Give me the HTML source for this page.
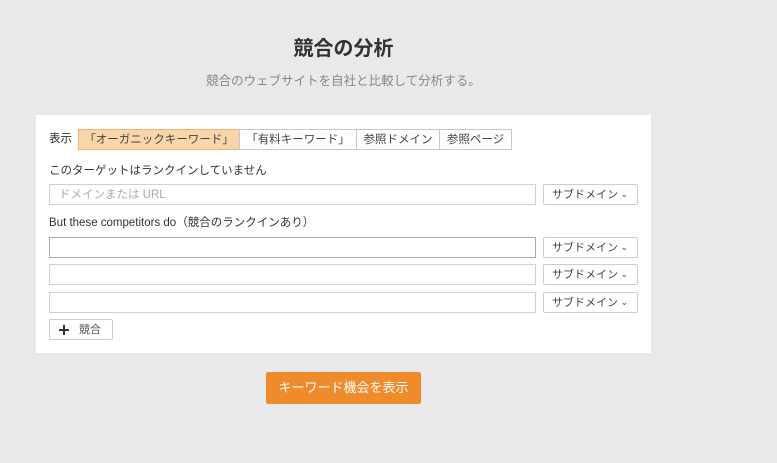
<!DOCTYPE html>
<html><head><meta charset="utf-8"><style>
*{box-sizing:border-box;margin:0;padding:0}
body{width:777px;height:463px;background:#e9e9eb;font-family:"Liberation Sans","Noto Sans CJK JP",sans-serif;position:relative;overflow:hidden;color:#333}
.a{position:absolute}
h1{position:absolute;left:0;width:687px;top:36px;text-align:center;font-size:20px;font-weight:bold;color:#333;line-height:26px}
.sub{left:0;width:687px;top:73px;text-align:center;font-size:12.5px;color:#888;line-height:16px}
.panel{left:36px;top:115px;width:615px;height:238px;background:#fff}
.lbl{font-size:11.5px;color:#333;line-height:14px}
.f{display:flex;align-items:center}
.tab{top:129px;height:21px;border:1px solid #c8c8c8;font-size:11.5px;justify-content:center;background:#fff;color:#444;line-height:14px}
.inp{left:49px;width:487px;height:21px;border:1px solid #d0d0d0;background:#fff;font-size:11.5px;color:#aaa;padding-left:9px;line-height:14px}
.sel{left:543px;width:95px;height:21px;border:1px solid #ccc;border-radius:2px;font-size:11px;padding-left:8px;color:#444;background:#fff;line-height:14px}
.sel i{font-style:normal;position:absolute;right:9px;top:2px;font-size:9px}
.btn{left:266px;top:372px;width:155px;height:32px;background:#ef8b2b;color:#fff;font-size:13px;justify-content:center;border-radius:2px;line-height:16px}
</style></head><body>
<h1>競合の分析</h1>
<div class="a sub">競合のウェブサイトを自社と比較して分析する。</div>
<div class="a panel"></div>
<div class="a lbl" style="left:49px;top:132px">表示</div>
<div class="a tab f" style="left:78px;width:162px;background:#f8d6aa;border-color:#e8b67e">「オーガニックキーワード」</div>
<div class="a tab f" style="left:239px;width:118px">「有料キーワード」</div>
<div class="a tab f" style="left:356px;width:84px">参照ドメイン</div>
<div class="a tab f" style="left:439px;width:73px">参照ページ</div>
<div class="a lbl" style="left:49px;top:164px">このターゲットはランクインしていません</div>
<div class="a inp f" style="top:184px">ドメインまたは URL</div>
<div class="a sel f" style="top:184px">サブドメイン<i>⌄</i></div>
<div class="a lbl" style="left:49px;top:216px">But these competitors do（競合のランクインあり）</div>
<div class="a inp" style="top:237px;border-color:#aaa"></div>
<div class="a sel f" style="top:237px">サブドメイン<i>⌄</i></div>
<div class="a inp" style="top:264px"></div>
<div class="a sel f" style="top:264px">サブドメイン<i>⌄</i></div>
<div class="a inp" style="top:292px"></div>
<div class="a sel f" style="top:292px">サブドメイン<i>⌄</i></div>
<div class="a f" style="left:49px;top:319px;width:64px;height:21px;border:1px solid #ccc;border-radius:2px;background:#fff;font-size:11px;color:#555;line-height:14px">
<svg class="a" style="left:9px;top:5px" width="10" height="10"><path d="M5 0V10M0 5H10" stroke="#333" stroke-width="2"/></svg>
<span style="position:absolute;left:29px;top:3px">競合</span></div>
<div class="a btn f">キーワード機会を表示</div>
</body></html>
